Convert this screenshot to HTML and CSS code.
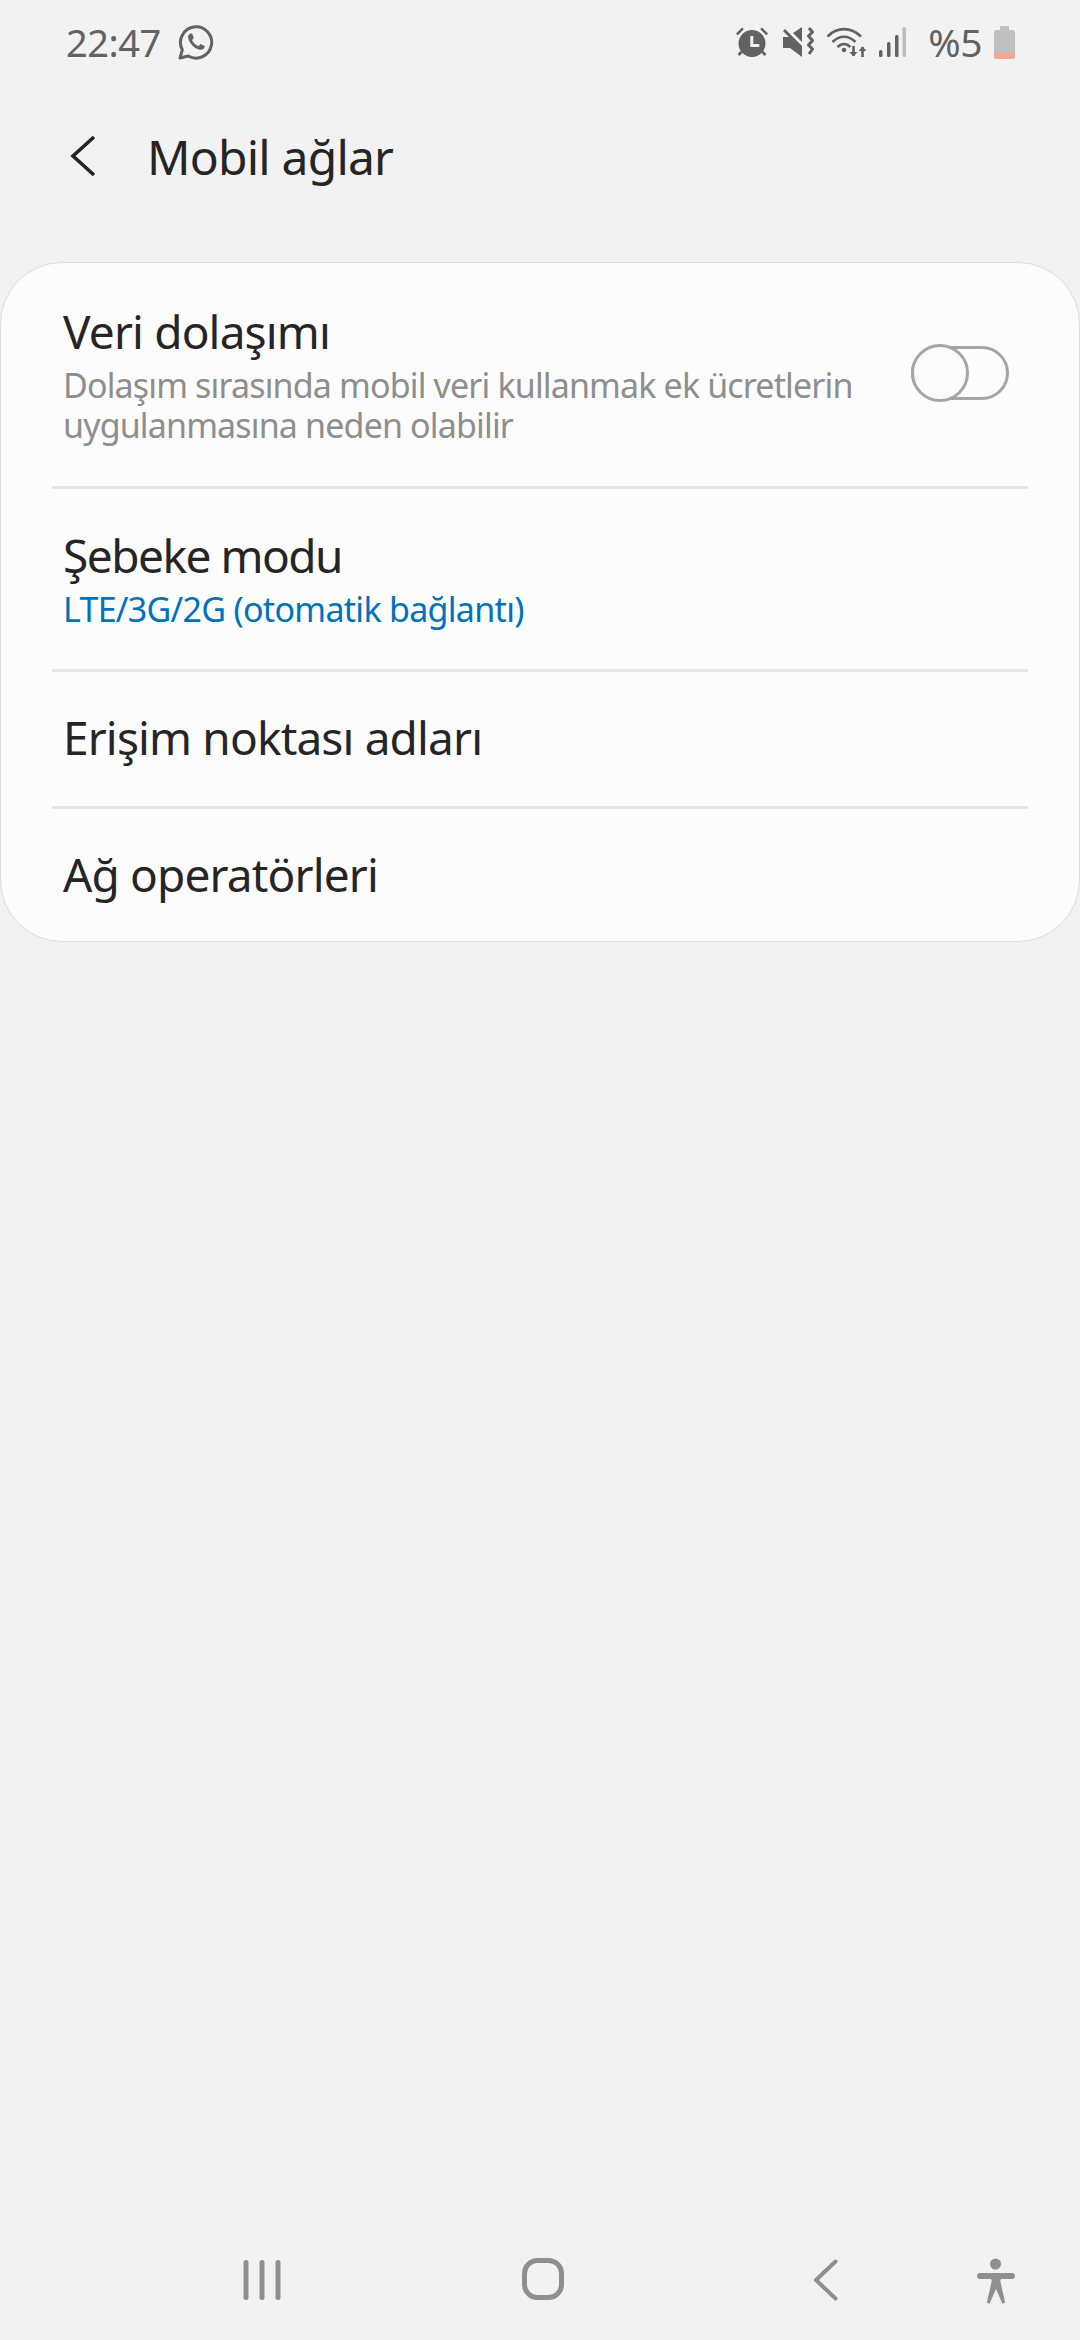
FILE: index.html
```html
<!DOCTYPE html>
<html lang="tr">

<head>
    <meta charset="UTF-8" />
    <title>Mobil ağlar</title>
    <meta name="viewport" content="width=device-width, initial-scale=1.0" />
    <link rel="stylesheet" href="styles.css">
</head>

<body>

    <!-- Durum çubuğu -->
    <div class="status-bar">
        <div class="status-left">
            <span class="time">22:47</span>
            <svg class="ic-whatsapp" viewBox="0 0 36 36" fill="none">
                <path d="M2 34l2.300-8.200A15.600 15.600 0 1 1 10.300 32z" stroke="#626262" stroke-width="3" stroke-linejoin="round" />
                <path d="M12.500 9.500c-1.600.6-2.800 2.300-2.300 4.700 1.100 5 6.300 10.300 11.400 11.500 2.500.5 4.300-.7 4.900-2.400l.2-1.400-4.200-2-2 2.300c-2.700-1-5.300-3.500-6.500-6.300l1.800-2-1.700-4.300z" fill="#626262" />
            </svg>
        </div>
        <div class="status-right">
            <svg class="ic-alarm" viewBox="0 0 34 32" fill="#626262">
                <path d="M1 7.500L7 1.500l1.800 1.800-6 6zM33 7.500l-6-6-1.800 1.800 6 6z" />
                <path d="M5.500 25l-3 3 2 2 3.300-3.300zM28.500 25l3 3-2 2-3.300-3.300z" />
                <path fill-rule="evenodd" d="M17 4a13.500 13.500 0 1 0 0 27 13.500 13.500 0 0 0 0-27zM15.300 10h3v8h6v3h-9z" />
            </svg>
            <svg class="ic-mute" viewBox="0 0 32 32">
                <path d="M1 11h6L1 5l2-2 17 17v11L8 22H1zM11 7l9-6v15z" fill="#626262" />
                <path d="M27 2l3.500 4-4 4 4 4.500-4 4.500 4 4-3.500 5" fill="none" stroke="#626262" stroke-width="3" stroke-linejoin="round" />
            </svg>
            <svg class="ic-wifi" viewBox="0 0 42 32" fill="none" stroke="#626262" stroke-width="2.600">
                <path d="M1.500 10.500C11 .7 25 .7 35 10.500" />
                <path d="M6.500 16c7-7 16-7 23 0" />
                <path d="M11.500 21c4-4 9-4 13 0" />
                <circle cx="18" cy="24" r="2.300" fill="#626262" stroke="none" />
                <path d="M27.500 20v10M36.500 31v-10" />
                <path d="M23.500 26l4 4.500 4-4.500zM32.500 25l4-4.500 4 4.500z" fill="#626262" stroke="none" />
            </svg>
            <svg class="ic-signal" viewBox="0 0 27 30">
                <rect x="0" y="23" width="3.500" height="7" rx="1.500" fill="#626262" />
                <rect x="8" y="15" width="3.500" height="15" rx="1.500" fill="#626262" />
                <rect x="16" y="8" width="3.500" height="22" rx="1.500" fill="#626262" />
                <rect x="23.500" y="0" width="3.500" height="30" rx="1.500" fill="#bdbdbd" />
            </svg>
            <span class="percent">%5</span>
            <svg class="ic-battery" viewBox="0 0 21 33">
                <rect x="6" y="0" width="9" height="5" rx="1" fill="#bfbfbf" />
                <rect x="0" y="4" width="21" height="29" rx="2.500" fill="#bfbfbf" />
                <path d="M0 27h21v3.500a2.500 2.500 0 0 1-2.500 2.500h-16A2.500 2.500 0 0 1 0 30.500z" fill="#f5a78e" />
            </svg>
        </div>
    </div>

    <!-- Başlık -->
    <div class="title-bar">
        <svg class="ic-up" viewBox="0 0 26 42" fill="none">
            <path d="M24 2L3 21l21 19" stroke="#252525" stroke-width="3.600" />
        </svg>
        <h1>Mobil ağlar</h1>
    </div>

    <!-- Liste -->
    <div class="card">
        <div class="row row-roaming">
            <div class="row-text">
                <div class="row-title">Veri dolaşımı</div>
                <div class="row-sub">Dolaşım sırasında mobil veri kullanmak ek ücretlerin uygulanmasına neden olabilir</div>
            </div>
            <div class="switch"><div class="knob"></div></div>
        </div>
        <div class="row row-mode">
            <div class="row-text">
                <div class="row-title">Şebeke modu</div>
                <div class="row-value">LTE/3G/2G (otomatik bağlantı)</div>
            </div>
        </div>
        <div class="row row-plain">
            <div class="row-title">Erişim noktası adları</div>
        </div>
        <div class="row row-plain row-last">
            <div class="row-title">Ağ operatörleri</div>
        </div>
    </div>

    <!-- Gezinme çubuğu -->
    <div class="nav-bar">
        <svg class="ic-recent" viewBox="0 0 38 42" fill="#8f8f8f">
            <rect x="0.500" y="1" width="5" height="40" rx="2.500" />
            <rect x="16.500" y="1" width="5" height="40" rx="2.500" />
            <rect x="32.500" y="1" width="5" height="40" rx="2.500" />
        </svg>
        <svg class="ic-home" viewBox="0 0 43 44" fill="none">
            <rect x="2.500" y="2.500" width="37" height="37" rx="13" stroke="#8f8f8f" stroke-width="5" />
        </svg>
        <svg class="ic-back" viewBox="0 0 25 42" fill="none">
            <path d="M22.500 2.500L3 21l19.500 18.500" stroke="#8f8f8f" stroke-width="4" stroke-linecap="round" stroke-linejoin="round" />
        </svg>
        <svg class="ic-access" viewBox="0 0 38 48" fill="#8f8f8f">
            <circle cx="18.500" cy="6" r="5.500" />
            <path d="M3 15h32a3 3 0 0 1 0 6h-10c-1.500 0-2 1-1.500 3l4.500 20a2.500 2.500 0 0 1-2.700 1.500L19 31l-6.300 14.500A2.500 2.500 0 0 1 10 44l4.500-20c.5-2 0-3-1.500-3H3a3 3 0 0 1 0-6z" />
        </svg>
    </div>

</body>

</html>
```

FILE: styles.css
```css
body {
    margin: 0;
    width: 1080px;
    height: 2340px;
    background: #f2f2f2;
    font-family: 'Noto Sans', sans-serif;
    display: flex;
    flex-direction: column;
    overflow: hidden;
}

svg {
    display: block;
    flex: none;
}

.status-bar {
    height: 85px;
    box-sizing: border-box;
    padding: 23px 65px 0 66px;
    display: flex;
    justify-content: space-between;
    align-items: flex-start;
    color: #626262;
}

.status-left,
.status-right {
    display: flex;
    align-items: center;
}

.time {
    font-size: 38px;
    line-height: 38px;
    letter-spacing: -0.5px;
}

.percent {
    font-size: 39px;
    line-height: 38px;
    margin: 0 12px 0 22px;
    letter-spacing: -0.5px;
}

.ic-whatsapp {
    width: 36px;
    height: 36px;
    margin-left: 17px;
}

.ic-alarm {
    width: 34px;
    height: 32px;
}

.ic-mute {
    width: 32px;
    height: 32px;
    margin-left: 13px;
}

.ic-wifi {
    width: 42px;
    height: 32px;
    margin-left: 12px;
}

.ic-signal {
    width: 27px;
    height: 30px;
    margin-left: 11px;
}

.ic-battery {
    width: 21px;
    height: 33px;
}

.title-bar {
    height: 177px;
    box-sizing: border-box;
    padding: 50px 0 0 70px;
    display: flex;
    align-items: flex-start;
}

.ic-up {
    width: 26px;
    height: 42px;
}

.title-bar h1 {
    margin: -8px 0 0 51px;
    font-size: 48px;
    line-height: 60px;
    font-weight: 400;
    color: #252525;
    letter-spacing: -0.8px;
}

.card {
    background: #fcfcfc;
    border: 1px solid #dcdcdc;
    border-radius: 62px;
    height: 680px;
    box-sizing: border-box;
}

.row {
    margin: 0 51px;
    padding-left: 11px;
    display: flex;
    align-items: center;
    border-bottom: 3px solid #e6e6e6;
    box-sizing: border-box;
}

.row-roaming {
    height: 226px;
    padding-right: 19px;
    justify-content: space-between;
}

.row-mode {
    height: 183px;
}

.row-plain {
    height: 137px;
    padding-bottom: 4px;
}

.row-last {
    border-bottom: none;
    height: 134px;
}

.row-title {
    font-size: 46px;
    line-height: 60px;
    color: #252525;
    letter-spacing: -0.85px;
}

.row-text .row-title {
    margin: -4px 0 4px;
}

.row-mode .row-title {
    letter-spacing: -1.5px;
}

.row-sub {
    width: 830px;
    font-size: 34px;
    line-height: 40px;
    color: #8e8e8e;
    letter-spacing: -0.85px;
}

.row-value {
    font-size: 34px;
    line-height: 40px;
    color: #0072bc;
    letter-spacing: -0.7px;
}

.switch {
    position: relative;
    width: 98px;
    height: 54px;
    margin-bottom: 3px;
    box-sizing: border-box;
    border: 3.500px solid #a5a5a5;
    border-radius: 27px;
}

.knob {
    position: absolute;
    left: -3.500px;
    top: -5px;
    width: 58px;
    height: 58px;
    box-sizing: border-box;
    border: 3.500px solid #a5a5a5;
    border-radius: 50%;
    background: #fbfbfb;
}

.nav-bar {
    margin-top: auto;
    height: 82px;
    padding-left: 243px;
    display: flex;
    align-items: flex-start;
    box-sizing: border-box;
}

.ic-recent {
    width: 38px;
    height: 42px;
    margin-top: 1px;
}

.ic-home {
    width: 43px;
    height: 44px;
    margin-left: 241px;
}

.ic-back {
    width: 25px;
    height: 42px;
    margin-left: 248px;
    margin-top: 1px;
}

.ic-access {
    width: 38px;
    height: 48px;
    margin-left: 139px;
}
```
